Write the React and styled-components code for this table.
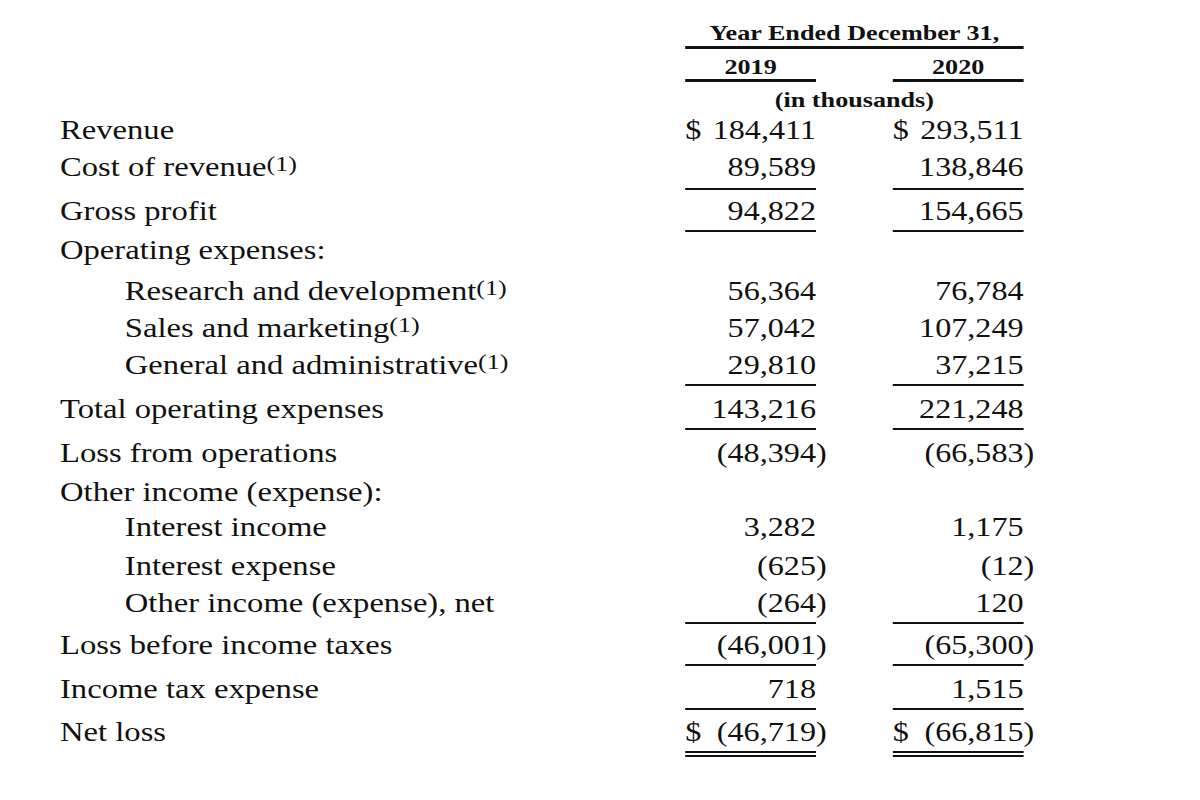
import React from "react";
import styled, { createGlobalStyle } from "styled-components";

const GlobalStyle = createGlobalStyle`
  html, body { margin: 0; padding: 0; background: #ffffff; }
  body { font-family: "Liberation Serif", "Times New Roman", serif; color: #111; }
`;

const Page = styled.div`
  width: 1000px;
  padding: 20px 0 0 50px;
  box-sizing: border-box;
  transform: scaleX(1.2);
  transform-origin: 0 0;
`;

const Grid = styled.div`
  display: grid;
  grid-template-columns: 457px 109px 109px;
  column-gap: 64px;
  align-items: start;
`;

const HeadCell = styled.div`
  grid-column: ${(p) => p.$span || "auto"};
  font-weight: 700;
  font-size: 21.8px;
  line-height: ${(p) => p.$lh || 24}px;
  text-align: center;
  margin-top: ${(p) => p.$mt || 0}px;
  border-bottom: ${(p) => (p.$rule ? "3px solid #111" : "none")};
  white-space: nowrap;
`;

const Label = styled.div`
  grid-column: 1;
  font-size: 27.2px;
  line-height: 37px;
  height: 37px;
  padding-left: ${(p) => (p.$indent ? 54 : 0)}px;
  margin-top: ${(p) => p.$mt || 0}px;
  white-space: nowrap;
`;

const Note = styled.span`
  font-size: 0.8em;
  line-height: 1;
  position: relative;
  top: -0.22em;
`;

const Value = styled.div`
  display: flex;
  justify-content: ${(p) => (p.$dollar ? "space-between" : "flex-end")};
  font-size: 26.8px;
  line-height: 37px;
  margin-top: ${(p) => p.$mt || 0}px;
  padding-bottom: ${(p) => p.$pb || 0}px;
  border-bottom: ${(p) =>
    p.$rule === "double" ? "6px double #111" : p.$rule ? "2px solid #111" : "none"};
  white-space: nowrap;
`;

const Hang = styled.span`
  margin-right: -0.333em;
`;

const rows = [
  { label: "Revenue", v: ["184,411", "293,511"], dollar: true },
  { label: "Cost of revenue", note: true, v: ["89,589", "138,846"], rule: true, pb: 2 },
  { label: "Gross profit", v: ["94,822", "154,665"], rule: true, mt: 3 },
  { label: "Operating expenses:" },
  { label: "Research and development", note: true, indent: true, v: ["56,364", "76,784"], mt: 4 },
  { label: "Sales and marketing", note: true, indent: true, v: ["57,042", "107,249"] },
  { label: "General and administrative", note: true, indent: true, v: ["29,810", "37,215"], rule: true },
  { label: "Total operating expenses", v: ["143,216", "221,248"], rule: true, mt: 5 },
  { label: "Loss from operations", v: ["(48,394)", "(66,583)"], mt: 5 },
  { label: "Other income (expense):", mt: 2 },
  { label: "Interest income", indent: true, v: ["3,282", "1,175"], mt: -2 },
  { label: "Interest expense", indent: true, v: ["(625)", "(12)"], mt: 2 },
  { label: "Other income (expense), net", indent: true, v: ["(264)", "120"], rule: true },
  { label: "Loss before income taxes", v: ["(46,001)", "(65,300)"], rule: true, mt: 3 },
  { label: "Income tax expense", v: ["718", "1,515"], rule: true, mt: 5 },
  { label: "Net loss", v: ["(46,719)", "(66,815)"], dollar: true, rule: "double", mt: 4 },
];

function Amount({ text }) {
  if (text.startsWith("(")) {
    return (
      <span>
        {text.slice(0, -1)}
        <Hang>)</Hang>
      </span>
    );
  }
  return <span>{text}</span>;
}

export default function App() {
  return (
    <>
      <GlobalStyle />
      <Page>
        <Grid>
          <HeadCell $span="2 / 4" $lh={26} $rule>
            Year Ended December 31,
          </HeadCell>
          <div />
          <HeadCell $mt={6} $rule>2019</HeadCell>
          <HeadCell $mt={6} $rule>2020</HeadCell>
          <HeadCell $span="2 / 4" $mt={6}>(in thousands)</HeadCell>
          {rows.map((r, i) => (
            <React.Fragment key={i}>
              <Label $indent={r.indent} $mt={r.mt}>
                {r.label}
                {r.note && <Note>(1)</Note>}
              </Label>
              {r.v ? (
                r.v.map((val, j) => (
                  <Value key={j} $dollar={r.dollar} $rule={r.rule} $mt={r.mt} $pb={r.pb}>
                    {r.dollar && <span>$</span>}
                    <Amount text={val} />
                  </Value>
                ))
              ) : (
                <>
                  <div />
                  <div />
                </>
              )}
            </React.Fragment>
          ))}
        </Grid>
      </Page>
    </>
  );
}
